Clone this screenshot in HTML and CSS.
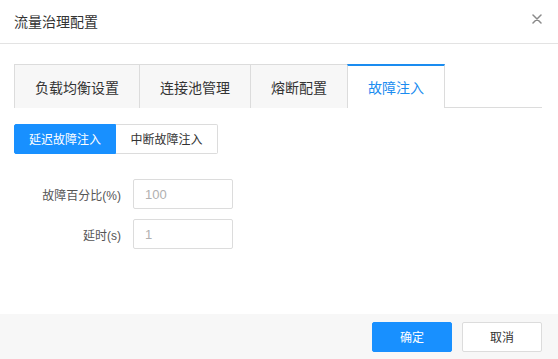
FILE: index.html
```html
<!DOCTYPE html>
<html lang="zh">
<head>
<meta charset="utf-8">
<title>流量治理配置</title>
<link rel="stylesheet" href="styles.css">
</head>
<body>
<div class="dialog">
  <div class="header">
    <span class="title">流量治理配置</span>
    <span class="close">
      <svg width="10" height="10" viewBox="0 0 10 10"><path d="M1 1L9 9M9 1L1 9" stroke="#8a8a8a" stroke-width="1.5" stroke-linecap="round"/></svg>
    </span>
  </div>
  <div class="body">
    <div class="tabs">
      <div class="tab">负载均衡设置</div>
      <div class="tab">连接池管理</div>
      <div class="tab">熔断配置</div>
      <div class="tab active">故障注入</div>
    </div>
    <div class="seg">
      <button class="seg-btn on">延迟故障注入</button>
      <button class="seg-btn">中断故障注入</button>
    </div>
    <div class="form">
      <div class="row">
        <label class="label">故障百分比<span class="latin">(%)</span></label>
        <input class="input" placeholder="100">
      </div>
      <div class="row">
        <label class="label">延时<span class="latin">(s)</span></label>
        <input class="input" placeholder="1">
      </div>
    </div>
  </div>
  <div class="footer">
    <button class="btn primary">确定</button>
    <button class="btn">取消</button>
  </div>
</div>
</body>
</html>
```
FILE: styles.css
```css
* { box-sizing: border-box; }
html, body { margin: 0; padding: 0; background: #fff; }
body {
  font-family: "Noto Sans CJK SC", "Noto Sans", sans-serif;
  color: #333;
}
.dialog {
  width: 558px;
  height: 359px;
  display: flex;
  flex-direction: column;
}
.header {
  height: 44px;
  border-bottom: 1px solid #e3e3e3;
  padding: 0 16px 0 14px;
  display: flex;
  align-items: center;
  justify-content: space-between;
}
.title { font-size: 14px; color: #333; line-height: 1; padding-bottom: 1px; }
.close { display: flex; width: 10px; height: 10px; margin-top: -5px; }
.body {
  flex: 1;
  padding: 20px 16px 0 14px;
}
.tabs {
  display: flex;
  border-bottom: 1px solid #dcdcdc;
  height: 44px;
}
.tab {
  height: 44px;
  padding: 0 20px;
  border: 1px solid #dcdcdc;
  border-right: none;
  border-bottom: none;
  background: #f7f7f7;
  font-size: 14px;
  color: #333;
  display: flex;
  align-items: center;
  line-height: 1;
}
.tab.active {
  background: #fff;
  color: #1a8cf0;
  border-top: 2px solid #1a8cf0;
  border-right: 1px solid #dcdcdc;
  padding-bottom: 1px;
}
.seg {
  display: flex;
  margin-top: 16px;
}
.seg-btn {
  width: 102px;
  height: 30px;
  padding: 0;
  white-space: nowrap;
  text-align: center;
  font-family: inherit;
  font-size: 12px;
  color: #333;
  background: #fff;
  border: 1px solid #dcdcdc;
  border-left: none;
  border-radius: 0 2px 2px 0;
  line-height: 1;
  margin: 0;
}
.seg-btn.on {
  background: #1890ff;
  border: 1px solid #1890ff;
  color: #fff;
  border-radius: 2px 0 0 2px;
}
.form { margin-top: 25px; display: flex; flex-direction: column; gap: 10px; }
.row { display: flex; align-items: center; gap: 12px; }
.label {
  width: 107px;
  text-align: right;
  font-size: 12px;
  color: #555;
}
.latin { font-family: "Liberation Sans", sans-serif; }
.input {
  width: 100px;
  height: 30px;
  border: 1px solid #dcdcdc;
  border-radius: 2px;
  padding: 0 11px;
  font-family: "Liberation Sans", "Noto Sans", sans-serif;
  font-size: 13px;
  color: #333;
  outline: none;
}
.input::placeholder { color: #b0b0b0; }
.footer {
  height: 45px;
  background: #f7f7f7;
  display: flex;
  justify-content: flex-end;
  gap: 10px;
  padding: 8px 16px 0 0;
}
.btn {
  width: 80px;
  height: 30px;
  border: 1px solid #dcdcdc;
  background: #fff;
  border-radius: 2px;
  font-family: inherit;
  font-size: 12px;
  color: #333;
  line-height: 1;
}
.btn.primary {
  background: #1890ff;
  border-color: #1890ff;
  color: #fff;
}
```
